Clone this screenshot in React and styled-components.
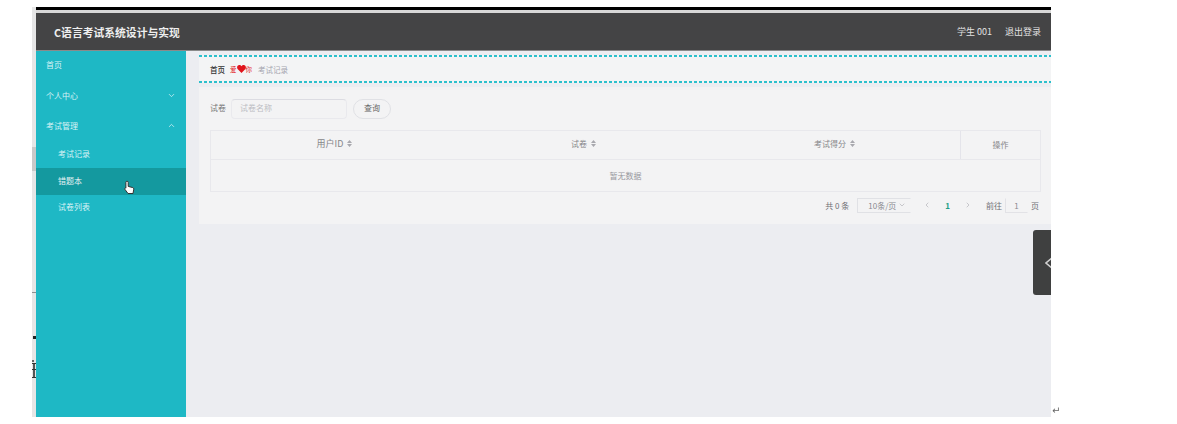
import React from "react";
import styled, { createGlobalStyle } from "styled-components";
import { ChevronDown, ChevronUp, ChevronLeft, ChevronRight } from "lucide-react";

const GlobalStyle = createGlobalStyle`
  html, body {
    margin: 0;
    padding: 0;
    background: #fff;
    font-family: "Noto Sans CJK SC", "Liberation Sans", sans-serif;
  }
`;

const Page = styled.div`
  position: relative;
  width: 1177px;
  height: 424px;
  overflow: hidden;
  padding: 7px 0 0 32px;
  box-sizing: border-box;
  display: flex;
  filter: blur(0.55px);
`;

const Gutter = styled.div`
  position: relative;
  width: 4px;
  height: 410px;
  background: #e6e6e6;
`;

const GutterMark = styled.span`
  position: absolute;
  left: ${(p) => p.$left || 0}px;
  top: ${(p) => p.$top}px;
  width: ${(p) => p.$width || 4}px;
  height: ${(p) => p.$height}px;
  background: ${(p) => p.$color};
`;

const Screen = styled.div`
  width: 1015px;
  height: 410px;
  display: flex;
  flex-direction: column;
`;

const TopRule = styled.div`
  height: 3px;
  flex: none;
  background: #000;
  border-bottom: 3px solid #d8d8d8;
`;

const Header = styled.header`
  height: 38px;
  flex: none;
  background: #444445;
  display: flex;
  align-items: center;
  justify-content: space-between;
  padding: 0 0 0 18px;
  color: #f0f0f0;
  box-sizing: border-box;
  border-bottom: 1px solid #8a8a8a;
`;

const Brand = styled.div`
  font-size: 10.8px;
  font-weight: 700;
  color: #eeeeee;
`;

const UserBox = styled.div`
  display: flex;
  gap: 13px;
  font-size: 9px;
  color: #e2e2e2;
  padding-right: 10px;
`;

const Body = styled.div`
  flex: 1;
  display: flex;
  min-height: 0;
`;

const Side = styled.aside`
  width: 150px;
  flex: none;
  background: #1eb8c5;
  color: #e8f8fa;
  font-size: 8px;
`;

const MenuItem = styled.div`
  height: ${(p) => p.$height || 30}px;
  display: flex;
  align-items: center;
  justify-content: space-between;
  box-sizing: border-box;
  padding: 0 10px 3px ${(p) => (p.$sub ? 22 : 10)}px;
  background: ${(p) => (p.$active ? "#14999f" : "transparent")};
  position: relative;
  color: ${(p) => (p.$active ? "#e4f2f3" : "#d8f2f5")};
`;

const Cursor = styled.svg`
  position: absolute;
  left: 88px;
  top: 12px;
  width: 11px;
  height: 15px;
`;

const Main = styled.main`
  flex: 1;
  background: #ecedf1;
  padding: 4px 0 0 13px;
  min-width: 0;
  position: relative;
`;

const Crumbs = styled.div`
  height: 28px;
  box-sizing: border-box;
  background-color: #f3f4f5;
  background-image: linear-gradient(to right, #2cc0cc 3px, transparent 3px),
    linear-gradient(to right, #2cc0cc 3px, transparent 3px);
  background-size: 5px 2px, 5px 2px;
  background-position: 0 0, 0 100%;
  background-repeat: repeat-x;
  display: flex;
  align-items: center;
  padding-left: 11px;
  font-size: 7.5px;
  color: #a4a5af;
`;

const CrumbHome = styled.span`
  color: #333;
  font-weight: 500;
  margin-right: 5px;
`;

const CrumbLove = styled.span`
  color: #e2242a;
  margin-right: 6px;
  display: flex;
  align-items: center;
  font-size: 6.5px;
`;

const Card = styled.section`
  margin-top: 4px;
  height: 137px;
  background: #f3f3f4;
  padding: 11px 10px 0 11px;
  box-sizing: border-box;
`;

const Filter = styled.div`
  display: flex;
  align-items: center;
  height: 21px;
  font-size: 8px;
  color: #777;
`;

const FilterLabel = styled.span`
  width: 21px;
  padding-bottom: 2px;
`;

const FilterInput = styled.div`
  width: 116px;
  height: 20px;
  box-sizing: border-box;
  border: 1px solid #e9e9ed;
  border-top-color: #dcdce2;
  border-radius: 4px;
  padding: 0 0 2px 8px;
  display: flex;
  align-items: center;
  color: #bcbdc3;
`;

const SearchButton = styled.div`
  margin-left: 6px;
  width: 38px;
  height: 20px;
  box-sizing: border-box;
  border: 1px solid #e0e1e5;
  border-radius: 10px;
  padding-bottom: 2px;
  display: flex;
  align-items: center;
  justify-content: center;
  color: #666;
`;

const Table = styled.div`
  margin-top: 11px;
  width: 831px;
  border: 1px solid #e8e8ec;
  box-sizing: border-box;
  font-size: 8px;
  color: #868689;
`;

const HeadRow = styled.div`
  display: grid;
  grid-template-columns: 248px 250px 252px 1fr;
  height: 29px;
  box-sizing: border-box;
  padding-bottom: 0;
  border-bottom: 1px solid #e8e8ec;
`;

const HeadCell = styled.div`
  display: flex;
  align-items: center;
  justify-content: center;
  gap: 4px;
  padding-bottom: 3px;
  border-right: 1px solid ${(p) => (p.$ruled ? "#e4e4ea" : "transparent")};
  font-size: ${(p) => p.$size || 8}px;
  &:last-child {
    border-right: none;
    padding-bottom: 1px;
  }
`;

const SortMark = styled.svg`
  width: 5px;
  height: 7px;
`;

const EmptyRow = styled.div`
  height: 31px;
  display: flex;
  align-items: center;
  justify-content: center;
  color: #98989e;
`;

const Pager = styled.div`
  margin-top: 5px;
  width: 831px;
  display: flex;
  align-items: center;
  justify-content: flex-end;
  height: 16px;
  font-size: 8px;
  color: #707074;
  padding-right: 2px;
  box-sizing: border-box;
`;

const PageSize = styled.div`
  margin-left: 8px;
  width: 54px;
  height: 15px;
  box-sizing: border-box;
  border: 1px solid #e0e1e5;
  border-right-color: transparent;
  display: flex;
  align-items: center;
  justify-content: space-between;
  padding: 0 4px 0 10px;
  color: #8a8a90;
`;

const PagerArrows = styled.div`
  display: flex;
  align-items: center;
  gap: 14px;
  margin: 0 14px 0 12px;
  color: #b0b0b6;
`;

const PageNum = styled.span`
  color: #1f9e86;
  font-weight: 700;
`;

const JumpInput = styled.div`
  margin: 0 3px;
  width: 23px;
  height: 15px;
  box-sizing: border-box;
  border: 1px solid #e2e2e6;
  border-top-color: transparent;
  border-right-color: transparent;
  display: flex;
  align-items: center;
  justify-content: center;
  color: #8a8a90;
`;

const DrawerHandle = styled.div`
  position: absolute;
  right: 0;
  top: 179px;
  width: 18px;
  height: 65px;
  background: #3f4040;
  border-radius: 3px 0 0 3px;
  display: flex;
  align-items: center;
  padding-left: 12px;
  box-sizing: border-box;
  overflow: hidden;
`;

const HandleGlyph = styled.svg`
  flex: none;
  width: 10px;
  height: 12px;
`;

const ReturnMark = styled.span`
  position: absolute;
  left: 1052px;
  top: 405px;
  font-size: 10px;
  line-height: 12px;
  color: #666;
  font-family: "DejaVu Sans", sans-serif;
`;

const sort = (
  <SortMark viewBox="0 0 5 7">
    <path d="M2.5 0 5 3H0zM2.5 7 0 4h5z" fill="#a8a8ae" />
  </SortMark>
);

export default function App() {
  return (
    <>
      <GlobalStyle />
      <Page>
        <Gutter>
          <GutterMark $top={140} $height={24} $color="#c9c9c9" />
          <GutterMark $top={285} $height={1} $color="#8f8f8f" />
          <GutterMark $top={329} $height={3} $left={1} $width={3} $color="#222" />
          <GutterMark $top={353} $height={2} $width={2} $color="#666" />
          <GutterMark $top={356} $height={15} $left={1} $width={2} $color="#555" />
          <GutterMark $top={356} $height={1} $width={4} $color="#333" />
          <GutterMark $top={362} $height={1} $width={4} $color="#333" />
          <GutterMark $top={370} $height={1} $width={4} $color="#333" />
        </Gutter>
        <Screen>
          <TopRule />
          <Header>
            <Brand>C语言考试系统设计与实现</Brand>
            <UserBox>
              <span>学生 001</span>
              <span>退出登录</span>
            </UserBox>
          </Header>
          <Body>
            <Side>
              <MenuItem>首页</MenuItem>
              <MenuItem $height={31}>
                个人中心
                <ChevronDown size={9} />
              </MenuItem>
              <MenuItem>
                考试管理
                <ChevronUp size={9} />
              </MenuItem>
              <MenuItem $sub $height={26}>考试记录</MenuItem>
              <MenuItem $sub $active $height={27}>
                错题本
                <Cursor viewBox="0 0 11 15">
                  <path
                    d="M3 1.2c.8 0 1.2.5 1.2 1.2v4l4.6 1.2c.7.2 1.1.7 1 1.5L9 13.5H4L.8 9.2c-.4-.6 0-1.4.8-1.2l.3.2V2.4C1.9 1.7 2.3 1.2 3 1.2z"
                    fill="#fff"
                    stroke="#333"
                    strokeWidth="1"
                  />
                </Cursor>
              </MenuItem>
              <MenuItem $sub $height={26}>试卷列表</MenuItem>
            </Side>
            <Main>
              <Crumbs>
                <CrumbHome>首页</CrumbHome>
                <CrumbLove>
                  爱
                  <svg width="9" height="8" viewBox="0 0 9 8">
                    <path d="M4.5 8 .6 3.9C-.6 2.4.4 0 2.3 0c1 0 1.7.5 2.2 1.3C5 .5 5.7 0 6.7 0c1.9 0 2.9 2.4 1.7 3.9z" fill="#e0141c" />
                  </svg>
                  你
                </CrumbLove>
                <span>考试记录</span>
              </Crumbs>
              <Card>
                <Filter>
                  <FilterLabel>试卷</FilterLabel>
                  <FilterInput>试卷名称</FilterInput>
                  <SearchButton>查询</SearchButton>
                </Filter>
                <Table>
                  <HeadRow>
                    <HeadCell $size={9}>用户ID {sort}</HeadCell>
                    <HeadCell>试卷 {sort}</HeadCell>
                    <HeadCell $ruled>考试得分 {sort}</HeadCell>
                    <HeadCell>操作</HeadCell>
                  </HeadRow>
                  <EmptyRow>暂无数据</EmptyRow>
                </Table>
                <Pager>
                  <span>共 0 条</span>
                  <PageSize>
                    10条/页
                    <ChevronDown size={8} color="#b0b0b6" />
                  </PageSize>
                  <PagerArrows>
                    <ChevronLeft size={8} />
                    <PageNum>1</PageNum>
                    <ChevronRight size={8} />
                  </PagerArrows>
                  <span>前往</span>
                  <JumpInput>1</JumpInput>
                  <span>页</span>
                </Pager>
              </Card>
              <DrawerHandle>
                <HandleGlyph viewBox="0 0 10 12">
                  <path d="M7 1 1 6l6 5" fill="none" stroke="#d0d0d0" strokeWidth="1.5" />
                </HandleGlyph>
              </DrawerHandle>
            </Main>
          </Body>
        </Screen>
        <ReturnMark>↵</ReturnMark>
      </Page>
    </>
  );
}
